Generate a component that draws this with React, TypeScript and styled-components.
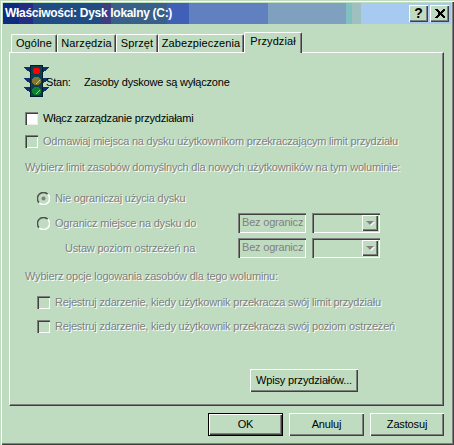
import React from "react";
import styled, { createGlobalStyle } from "styled-components";

const GREEN = "#c0dcc0";
const FONT = `"Liberation Sans", Arial, sans-serif`;

const Global = createGlobalStyle`
  html, body { margin: 0; padding: 0; background: ${GREEN}; }
  * { box-sizing: border-box; }
`;

const Dialog = styled.div`
  width: 454px;
  height: 445px;
  background: ${GREEN};
  padding: 3px;
  font: 11px/13px ${FONT};
  letter-spacing: -0.2px;
  color: #000;
  display: flex;
  flex-direction: column;
  overflow: hidden;
  box-shadow: inset 1px 1px 0 ${GREEN}, inset 2px 2px 0 #fff, inset -1px -1px 0 #404040, inset -2px -2px 0 #808080;
`;

const TitleBar = styled.div`
  height: 21px;
  flex: none;
  display: flex;
  align-items: center;
  justify-content: space-between;
  padding: 0 2px;
  background: linear-gradient(90deg,
    #0c2c80 0 16px, #242c84 16px 30px, #204c84 30px 99px, #403c80 99px 108px,
    #386088 108px 164px, #4060b8 164px 186px, #6080c0 186px 265px,
    #80a0c0 265px 343px, #80c0c0 343px 349px, #a0c0c0 349px 358px, #a6caf0 358px);
`;

const TitleText = styled.span`
  color: #fff;
  font-weight: 700;
  font-size: 12px;
  letter-spacing: -0.3px;
`;

const TitleButtons = styled.div`
  display: flex;
  gap: 2px;
`;

const TitleButton = styled.div`
  width: 19px;
  height: 17px;
  display: flex;
  align-items: center;
  justify-content: center;
  background: ${GREEN};
  font-weight: 700;
  font-size: 14px;
  box-shadow: inset 1px 1px 0 #fff, inset -1px -1px 0 #404040, inset -2px -2px 0 #808080;
  svg { display: block; }
`;

const Tabs = styled.div`
  display: flex;
  flex: none;
  height: 28px;
  padding-left: 8px;
  align-items: flex-end;
  position: relative;
  z-index: 1;
`;

const Tab = styled.div<{ $active?: boolean; $w: number }>`
  width: ${(p) => p.$w}px;
  height: ${(p) => (p.$active ? 21 : 18)}px;
  margin-bottom: ${(p) => (p.$active ? -1 : 0)}px;
  padding-top: 2px;
  text-align: center;
  letter-spacing: 0.1px;
  background: ${GREEN};
  border-top: 1px solid #fff;
  border-left: 1px solid #fff;
  border-right: 1px solid #404040;
  border-radius: 2px 2px 0 0;
  box-shadow: inset -1px 0 0 #808080;
`;

const Panel = styled.div`
  flex: none;
  height: 354px;
  margin: 0 7px 0 6px;
  padding: 12px 12px 0 15px;
  border-top: 1px solid #fff;
  border-left: 1px solid #fff;
  border-right: 1px solid #404040;
  border-bottom: 1px solid #404040;
  box-shadow: inset -1px -1px 0 #808080;
  display: flex;
  flex-direction: column;
`;

const StatusRow = styled.div`
  display: flex;
  align-items: center;
  height: 32px;
  margin-left: -1px;
`;

const StatusLabel = styled.span`
  margin: 2px 0 0 -3px;
  width: 38px;
`;

const StatusValue = styled.span`
  margin-top: 2px;
  white-space: nowrap;
`;

const Text = styled.span<{ $disabled?: boolean }>`
  white-space: nowrap;
  color: ${(p) => (p.$disabled ? "#808080" : "#000")};
  text-shadow: ${(p) => (p.$disabled ? "1px 1px 0 #fff" : "none")};
`;

const Row = styled.div<{ $top: number; $indent?: number }>`
  display: flex;
  align-items: center;
  height: 13px;
  margin-top: ${(p) => p.$top}px;
  padding-left: ${(p) => p.$indent ?? 0}px;
`;

const Check = styled.span<{ $disabled?: boolean }>`
  width: 13px;
  height: 13px;
  flex: none;
  margin-right: 5px;
  background: ${(p) => (p.$disabled ? GREEN : "#fff")};
  box-shadow: inset 1px 1px 0 #808080, inset 2px 2px 0 #404040, inset -1px -1px 0 ${(p) => (p.$disabled ? "#fff" : "#e8f0e8")};
`;

const RadioDot = styled.span`
  width: 13px;
  height: 13px;
  flex: none;
  margin-right: 5px;
  svg { display: block; }
`;

const LimitLabel = styled.div<{ $indent?: number; $shift?: number }>`
  display: flex;
  align-items: center;
  padding-left: ${(p) => p.$indent ?? 0}px;
  padding-top: ${(p) => p.$shift ?? 0}px;
`;

const LimitGrid = styled.div`
  display: grid;
  grid-template-columns: 201px 68px 68px;
  grid-template-rows: 25px 25px 26px;
  margin: 11px 0 0 12px;
  align-items: center;
`;

const Field = styled.div`
  width: 68px;
  height: 20px;
  padding: 3px 0 0 4px;
  color: #808080;
  white-space: nowrap;
  box-shadow: inset 1px 1px 0 #808080, inset 2px 2px 0 #404040, inset -1px -1px 0 #fff;
`;

const Combo = styled.div`
  width: 68px;
  height: 20px;
  margin-left: 6px;
  padding: 2px;
  display: flex;
  justify-content: flex-end;
  box-shadow: inset 1px 1px 0 #808080, inset 2px 2px 0 #404040, inset -1px -1px 0 #fff;
`;

const ComboArrow = styled.div`
  width: 16px;
  height: 16px;
  display: flex;
  align-items: center;
  justify-content: center;
  box-shadow: inset 1px 1px 0 #fff, inset -1px -1px 0 #404040, inset -2px -2px 0 #808080;
  &::after {
    content: "";
    width: 0;
    height: 0;
    border-left: 4px solid transparent;
    border-right: 4px solid transparent;
    border-top: 4px solid #808080;
    filter: drop-shadow(1px 1px 0 #fff);
  }
`;

const PushButton = styled.button<{ $default?: boolean; $w: number }>`
  width: ${(p) => p.$w}px;
  height: 23px;
  padding: 0;
  margin: 0;
  font: 11px/13px ${FONT};
  letter-spacing: -0.15px;
  color: #000;
  border: ${(p) => (p.$default ? "1px solid #000" : "0")};
  background: ${GREEN};
  box-shadow: inset 1px 1px 0 #fff, inset -1px -1px 0 #404040, inset -2px -2px 0 #808080;
`;

const EntriesRow = styled.div`
  display: flex;
  margin-top: 36px;
  padding-left: 225px;
`;

const Footer = styled.div`
  display: flex;
  justify-content: flex-end;
  gap: 6px;
  margin: 7px 7px 0 0;
`;

const Light = () => (
  <svg width="25" height="32" viewBox="0 0 25 32" shapeRendering="crispEdges" style={{ flex: "none" }}>
    <path d="M0 2h6v5H5V6H3V5H2V4H1V3H0zM25 2h-6v5h1V6h2V5h1V4h1V3h1zM0 13h6v5H5v-1H3v-1H2v-1H1v-1H0zM25 13h-6v5h1v-1h2v-1h1v-1h1v-1h1zM0 22h6v5H5v-1H3v-1H2v-1H1v-1H0zM25 22h-6v5h1v-1h2v-1h1v-1h1v-1h1z" fill="#0c3070" />
    <rect x="6" y="0" width="13" height="32" fill="#002030" />
    <rect x="7" y="1" width="11" height="30" fill="#0c4050" />
    <path d="M10 3h5v1h1v4h-1v1h-5V8H9V4h1z" fill="#ff0000" />
    <path d="M10 12h5v1h1v1h1v4h-1v1h-1v1h-5v-1H9v-1H8v-4h1v-1h1z" fill="#807830" />
    <path d="M10 22h5v1h1v1h1v4h-1v1h-1v1h-5v-1H9v-1H8v-4h1v-1h1z" fill="#108030" />
    <path d="M15 15h1v1h-1v1h-1v1h-1v1h-1v-1h1v-1h1v-1h1z" fill="#c8c8a0" />
    <path d="M15 25h1v1h-1v1h-1v1h-1v1h-1v-1h1v-1h1v-1h1z" fill="#a0d0a0" />
  </svg>
);

const Radio = ({ on }: { on?: boolean }) => (
  <RadioDot>
    <svg width="13" height="13" viewBox="0 0 13 13">
      <path d="M2.2 10.8A6 6 0 0 1 10.8 2.2" stroke="#505050" strokeWidth="1.5" fill="none" />
      <path d="M10.8 2.2A6 6 0 0 1 2.2 10.8" stroke="#fff" strokeWidth="1.5" fill="none" />
      {on && <circle cx="6.5" cy="6.5" r="2" fill="#808080" />}
    </svg>
  </RadioDot>
);

export default function App() {
  return (
    <Dialog>
      <Global />
      <TitleBar>
        <TitleText>Właściwości: Dysk lokalny (C:)</TitleText>
        <TitleButtons>
          <TitleButton>?</TitleButton>
          <TitleButton>
            <svg width="10" height="9" viewBox="0 0 10 9" shapeRendering="crispEdges">
              <path d="M0 0h2l3 3 3-3h2v1L7 4v1l3 3v1H8L5 6 2 9H0V8l3-3V4L0 1z" fill="#000" />
            </svg>
          </TitleButton>
        </TitleButtons>
      </TitleBar>
      <Tabs>
        <Tab $w={46}>Ogólne</Tab>
        <Tab $w={59}>Narzędzia</Tab>
        <Tab $w={42}>Sprzęt</Tab>
        <Tab $w={86}>Zabezpieczenia</Tab>
        <Tab $w={58} $active>Przydział</Tab>
      </Tabs>
      <Panel>
        <StatusRow>
          <Light />
          <StatusLabel>Stan:</StatusLabel>
          <StatusValue>Zasoby dyskowe są wyłączone</StatusValue>
        </StatusRow>
        <Row $top={15}>
          <Check />
          <Text>Włącz zarządzanie przydziałami</Text>
        </Row>
        <Row $top={10}>
          <Check $disabled />
          <Text $disabled>Odmawiaj miejsca na dysku użytkownikom przekraczającym limit przydziału</Text>
        </Row>
        <Row $top={13}>
          <Text $disabled>Wybierz limit zasobów domyślnych dla nowych użytkowników na tym woluminie:</Text>
        </Row>
        <LimitGrid>
          <LimitLabel $shift={2}><Radio on /><Text $disabled>Nie ograniczaj użycia dysku</Text></LimitLabel>
          <span />
          <span />
          <LimitLabel $shift={2}><Radio /><Text $disabled>Ogranicz miejsce na dysku do</Text></LimitLabel>
          <Field>Bez ogranicz</Field>
          <Combo><ComboArrow /></Combo>
          <LimitLabel $indent={28}><Text $disabled>Ustaw poziom ostrzeżeń na</Text></LimitLabel>
          <Field>Bez ogranicz</Field>
          <Combo><ComboArrow /></Combo>
        </LimitGrid>
        <Row $top={9}>
          <Text $disabled>Wybierz opcje logowania zasobów dla tego woluminu:</Text>
        </Row>
        <Row $top={13} $indent={12}>
          <Check $disabled />
          <Text $disabled>Rejestruj zdarzenie, kiedy użytkownik przekracza swój limit przydziału</Text>
        </Row>
        <Row $top={11} $indent={12}>
          <Check $disabled />
          <Text $disabled>Rejestruj zdarzenie, kiedy użytkownik przekracza swój poziom ostrzeżeń</Text>
        </Row>
        <EntriesRow>
          <PushButton $w={108}>Wpisy przydziałów...</PushButton>
        </EntriesRow>
      </Panel>
      <Footer>
        <PushButton $w={75} $default>OK</PushButton>
        <PushButton $w={75}>Anuluj</PushButton>
        <PushButton $w={74}>Zastosuj</PushButton>
      </Footer>
    </Dialog>
  );
}
